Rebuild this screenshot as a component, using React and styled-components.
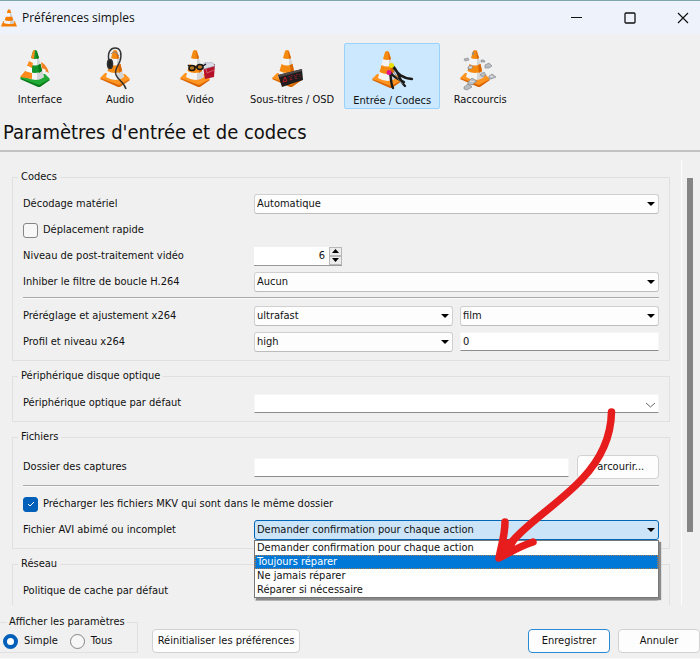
import React from "react";
import styled, { createGlobalStyle } from "styled-components";

const uiFont = '"DejaVu Sans Condensed", "DejaVu Sans", "Noto Sans", sans-serif';

const GlobalStyle = createGlobalStyle`
  *, *::before, *::after { box-sizing: border-box; }
  body {
    margin: 0;
    background: #f0f0f0;
    color: #111;
    font: 11px/16px ${uiFont};
    font-stretch: condensed;
  }
  button, input, select { font: inherit; color: inherit; margin: 0; }
`;

const Window = styled.div`
  position: relative;
  display: flex;
  flex-direction: column;
  height: 100vh;
  overflow: hidden;
  border-top: 1px solid #7ba7ad;
  border-bottom: 1px solid #fafafa;
`;

const TitleBar = styled.header`
  display: flex;
  align-items: center;
  flex: none;
  height: 33px;
  padding-left: 1px;
  background: #eef3fb;
`;

const WindowTitle = styled.h1`
  flex: 1;
  margin: 0 0 0 5px;
  font: 400 12px/18px "Open Sans", "Noto Sans", sans-serif;
  font-stretch: normal;
`;

const CaptionButton = styled.button`
  display: grid;
  place-items: center;
  width: 53px;
  height: 32px;
  padding: 0;
  border: 0;
  background: none;
  &:last-child { margin-right: -9px; }
`;

const Tabs = styled.nav`
  display: flex;
  flex: none;
  padding-top: 9px;
`;

const Tab = styled.button`
  display: flex;
  flex-direction: column;
  align-items: center;
  min-width: 80px;
  height: 66px;
  padding: ${(p) => (p.$active ? "5px 8px 0" : "4px 9px 0")};
  border: 1px solid ${(p) => (p.$active ? "#99d1ff" : "transparent")};
  border-radius: 2px;
  background: ${(p) => (p.$active ? "#cce8ff" : "transparent")};
  white-space: nowrap;
`;

const PageTitle = styled.h2`
  flex: none;
  margin: 0;
  padding: 9px 3px 4px;
  border-bottom: 2px solid #c3c3c3;
  font-size: 20px;
  line-height: 28px;
  font-weight: 400;
`;

const ScrollArea = styled.main`
  display: flex;
  flex: 1;
  min-height: 0;
  overflow: hidden;
`;

const Sections = styled.div`
  display: flex;
  flex: 1;
  flex-direction: column;
  gap: 7px;
  min-width: 0;
  padding: 17px 11px 0 12px;
`;

const Rail = styled.div`
  flex: none;
  width: 19px;
  margin-top: 8px;
  padding: 18px 6px 0 5px;
  border-left: 1px solid #fdfdfd;
`;

const Thumb = styled.div`
  width: 6px;
  height: 83%;
  background: #858585;
`;

const Group = styled.fieldset`
  flex: none;
  min-width: 0;
  margin: 0;
  padding: 9px 10px 8px;
  border: 1px solid #e0e0e0;
`;

const Legend = styled.legend`
  margin-left: -5px;
  padding: 0 3px;
`;

const Rows = styled.div`
  display: flex;
  flex-direction: column;
  gap: 6px;
`;

const Row = styled.div`
  display: grid;
  grid-template-columns: 231px minmax(0, 1fr);
  align-items: center;
  min-height: ${(p) => (p.$tall ? "26px" : "20px")};
`;

const Pair = styled.div`
  display: grid;
  grid-template-columns: 1fr 1fr;
  gap: 7px;
`;

const Browse = styled.div`
  display: flex;
  align-items: center;
  gap: 8px;
`;

const Divider = styled.hr`
  height: 2px;
  margin: 5px 0 7px;
  border: 0;
  border-top: 1px solid #a8a8a8;
  border-bottom: 1px solid #fafafa;
`;

const Field = styled.div`
  position: relative;
  min-width: 0;
`;

const Select = styled.select`
  display: block;
  width: 100%;
  height: 20px;
  padding: 0 20px 0 2px;
  appearance: none;
  border: 1px solid ${(p) => (p.$open ? "#0067b8" : "#d0d0d0")};
  border-bottom-color: ${(p) => (p.$open ? "#0067b8" : "#bcbcbc")};
  border-radius: 3px;
  background: ${(p) => (p.$open ? "#cce4f7" : "#fdfdfd")};
  line-height: 16px;
`;

const TextInput = styled.input`
  display: block;
  flex: 1;
  width: 100%;
  min-width: 0;
  height: 19px;
  padding: 0 2px;
  border: 1px solid #f6f6f6;
  border-bottom: 1px solid #8c8c8c;
  border-radius: 0;
  background: #fff;
`;

const ArrowMark = styled.svg`
  position: absolute;
  top: 8px;
  right: 4px;
  pointer-events: none;
`;

const Spin = styled.div`
  display: flex;
  width: 88px;
  height: 19px;
  border-bottom: 1px solid #999;
  background: #fff;
`;

const SpinInput = styled.input`
  flex: 1;
  min-width: 0;
  padding: 0 4px 0 0;
  border: 0;
  background: none;
  text-align: right;
`;

const SpinButtons = styled.div`
  display: grid;
  grid-template-rows: 1fr 1fr;
  width: 13px;
`;

const SpinButton = styled.button`
  display: grid;
  place-items: center;
  min-height: 0;
  padding: 0;
  border: 1px solid #b8b8b8;
  background: #ececec;
`;

const Check = styled.label`
  display: flex;
  align-items: center;
  gap: 5px;
  min-height: 20px;
`;

const CheckBox = styled.span`
  display: grid;
  flex: none;
  width: 15px;
  height: 15px;
  & > * { grid-area: 1 / 1; place-self: center; pointer-events: none; }
`;

const CheckInput = styled.input`
  && {
    width: 15px;
    height: 15px;
    appearance: none;
    border: 1px solid #858585;
    border-radius: 3px;
    background: #f7f7f7;
    pointer-events: auto;
  }
  &&:checked { border-color: #005fb8; background: #005fb8; }
`;

const Popup = styled.ul`
  position: absolute;
  z-index: 2;
  top: 100%;
  left: 0;
  right: 0;
  margin: 0;
  padding: 0;
  border: 1px solid #777;
  background: #fff;
  box-shadow: 2px 2px 1px #8a8a8a;
  list-style: none;
`;

const Option = styled.li`
  height: 14px;
  padding: 0 2px;
  line-height: 14px;
  background: ${(p) => (p.$current ? "#0078d7" : "transparent")};
  color: ${(p) => (p.$current ? "#fff" : "inherit")};
  outline: ${(p) => (p.$current ? "1px dotted #a97c52" : "none")};
  outline-offset: -1px;
`;

const PushButton = styled.button`
  height: 24px;
  min-width: ${(p) => (p.$wide ? "148px" : "82px")};
  padding: 0 2px;
  border: 1px solid ${(p) => (p.$primary ? "#2b8ad4" : "#d2d2d2")};
  border-radius: 4px;
  background: #fdfdfd;
  white-space: nowrap;
`;

const Footer = styled.footer`
  display: flex;
  flex: none;
  align-items: flex-end;
  gap: 8px;
  padding: 9px 0 5px;
`;

const ModeGroup = styled.fieldset`
  flex: none;
  width: 138px;
  height: 39px;
  margin: 0 6px 0 0;
  padding: 3px 0 0 3px;
  border: 1px solid #e0e0e0;
  border-left: 0;
`;

const ModeLegend = styled.legend`
  margin-left: 4px;
  padding: 0 2px;
  white-space: nowrap;
`;

const Modes = styled.div`
  display: flex;
  gap: 12px;
`;

const ModeLabel = styled.label`
  display: flex;
  align-items: center;
  gap: 6px;
`;

const Radio = styled.input`
  width: 15px;
  height: 15px;
  appearance: none;
  border: 1px solid #858585;
  border-radius: 50%;
  background: #f7f7f7;
  &:checked { border: 4px solid #005fb8; background: #fff; }
`;

const Spacer = styled.div`
  flex: 1;
`;

const Annotation = styled.svg`
  position: absolute;
  z-index: 5;
  top: 403px;
  right: 78px;
  pointer-events: none;
`;

function Cone({ green }) {
  const body = green ? "#12942a" : "#f58a10";
  return (
    <g>
      <path d="M0 31 L5 26 L24 27 L30 32 L20 39 L18 39 Z" fill={green ? "#087a19" : "#d96500"} />
      <path d="M0 30 L5 25 L25 26 L30 31 L19 37 Z" fill={green ? "#20aa35" : "#ff9420"} />
      <path d="M13 3 Q15 1 17 3 L24 29 Q16 35 6 29 Z" fill="#f4f4f4" />
      <path d="M17 3 L24 29 Q21 32 17 32 Z" fill="#c9cbcd" opacity=".75" />
      <path d="M13 3 Q15 1 17 3 L19 10 Q15 12 11 10 Z" fill={body} />
      <path d="M9.500 16 Q15 19 20.500 16 L22 23 Q15 27 7.500 23 Z" fill={body} />
      <path d="M16 2 L19 10 L17 11 Z M18 17 L20.500 16 L22 23 L19 25 Z" fill={green ? "#087a19" : "#d96500"} />
    </g>
  );
}

const extras = {
  interface: (
    <g>
      <path d="M13 3 Q14 2 15 2 L14 11 L11 10 Z M9 13 L13 15 L12 20 L7 18 Z M5 23 L12 25 L12 31 L0 29 Z" fill="#ff8a1c" />
      <path d="M8 18 L12 20 L12 25 L6 23 Z" fill="#fff" />
      <path d="M21 14 Q27 17 29 25 L25 23 L22 21 Z" fill="#f58220" />
      <path d="M22 20 L26 22 L24 24 Z" fill="#fff" />
    </g>
  ),
  audio: (
    <g fill="none" stroke="#333" strokeWidth="1.500">
      <path d="M9 13 C7 4 11 0 15 0 C21 0 22 6 20 13 C18 18 14 22 16 27 C18 32 24 34 26 41" />
      <ellipse cx="10" cy="16" rx="2.500" ry="4.500" fill="#222" />
      <path d="M11 6 Q15 1 19 8" stroke="#888" strokeWidth="1" />
    </g>
  ),
  video: (
    <g>
      <path d="M23 18 L35 16 L34 29 L25 31 Z" fill="#b3122a" />
      <path d="M25 18 L27 25 L34 22" fill="none" stroke="#d65a6c" strokeWidth="1" />
      <path d="M22 17 Q25 13 29 15 Q33 13 35 18 L24 21 Z" fill="#d7dce6" stroke="#8e96a7" strokeWidth=".5" />
      <g fill="#b77725" stroke="#151515" strokeWidth="1.500">
        <ellipse cx="12" cy="20" rx="3" ry="2.500" />
        <ellipse cx="20" cy="19" rx="3" ry="2.500" />
        <path d="M9 18 L8 17 M15 19 L17 19 M23 18 L26 16" />
      </g>
    </g>
  ),
  subtitles: (
    <g>
      <path d="M6 27 L30 21 L31 32 L10 39 Z" fill="#201c1e" />
      <path d="M6 27 L30 21 L30 23 L8 29 Z" fill="#514a4b" />
      <g fill="none" stroke="#b51d2b" strokeWidth="1">
        <path d="M11 34 L13 29 L15 33 Z" />
        <path d="M17 28 L20 32 M20 27 L18 33 M22 27 L25 31 M25 26 L23 31 M27 26 L29 29" strokeDasharray="1 1" />
      </g>
    </g>
  ),
  codecs: (
    <g fill="none" strokeLinecap="round">
      <path d="M17 23 C20 26 18 34 21 39 M20 17 C25 18 27 31 33 37 M21 18 C25 23 28 29 40 30 M19 24 C22 29 26 30 32 33" stroke="#1a1a1a" strokeWidth="2.400" />
      <path d="M22 22 Q25 31 31 35" stroke="#777" strokeWidth=".7" />
      <circle cx="19.500" cy="16.500" r="2.500" fill="#e8df00" />
      <circle cx="17" cy="23.500" r="2.500" fill="#dc148e" />
    </g>
  ),
  shortcuts: (
    <g stroke="#7c8085" strokeWidth=".6" fill="#b9bcc0">
      <path d="M4 11 L8 10 L9 12 L5 13 Z" />
      <path d="M12 5 L14 4 L13 7 Z" />
      <path d="M21 12 L24 12 L25 14 L21 14 Z" />
      <path d="M8 19 L11 17 L13 19 L11 21 L8 21 Z" />
      <path d="M25 17 L29 15 L32 18 L29 20 L25 20 Z" />
      <path d="M20 27 L24 24 L26 27 L23 29 Z" />
      <path d="M29 28 L32 26 L36 29 L31 31 L29 31 Z" />
      <path d="M8 34 L12 30 L17 33 L12 37 L8 37 Z" />
      <path d="M4 39 L8 36 L12 39 L7 42 L4 41 Z" />
      <path d="M10 33 L14 34 M30 28 L33 29 M9 19 L12 20" stroke="#fff" />
    </g>
  ),
};

function TabIcon({ kind }) {
  return (
    <svg width="40" height="44" viewBox="0 0 40 44" overflow="visible" aria-hidden="true">
      <Cone green={kind === "interface"} />
      {extras[kind]}
    </svg>
  );
}

const tabs = [
  ["interface", "Interface"],
  ["audio", "Audio"],
  ["video", "Vidéo"],
  ["subtitles", "Sous-titres / OSD"],
  ["codecs", "Entrée / Codecs"],
  ["shortcuts", "Raccourcis"],
];

function Combo({ id, label, value, open, children }) {
  return (
    <Field>
      <Select id={id} aria-label={label} defaultValue={value} $open={open}>
        <option>{value}</option>
      </Select>
      <ArrowMark width="8" height="4" viewBox="0 0 8 4" aria-hidden="true">
        <path d="M0 0 H8 L4 4 Z" fill="#000" />
      </ArrowMark>
      {children}
    </Field>
  );
}

function Tick({ checked, children }) {
  return (
    <Check>
      <CheckBox>
        <CheckInput type="checkbox" defaultChecked={checked} />
        {checked && (
          <svg width="10" height="10" viewBox="0 0 10 10" aria-hidden="true">
            <path d="M2 5 L4 7 L8 3" fill="none" stroke="#fff" strokeWidth="1" />
          </svg>
        )}
      </CheckBox>
      {children}
    </Check>
  );
}

const repairChoices = [
  "Demander confirmation pour chaque action",
  "Toujours réparer",
  "Ne jamais réparer",
  "Réparer si nécessaire",
];

export default function App() {
  return (
    <>
      <GlobalStyle />
      <Window>
        <TitleBar>
          <svg width="16" height="18" viewBox="0 0 30 40" preserveAspectRatio="none" aria-hidden="true">
            <path d="M4 27 H26 L30 39 H0 Z" fill="#f57c00" />
            <path d="M13 1 H17 L25 31 Q15 36 5 31 Z" fill="#f4f4f4" />
            <path d="M17 1 L25 31 Q21 34 17 34 Z" fill="#cfcfcf" />
            <path d="M13 1 H17 L19 9 H11 Z M9 17 H21 L23 25 Q15 28 7 25 Z" fill="#f57c00" />
          </svg>
          <WindowTitle>Préférences simples</WindowTitle>
          <CaptionButton aria-label="Réduire">
            <svg width="12" height="12" viewBox="0 0 12 12"><path d="M0 5.500 H11" stroke="#111" /></svg>
          </CaptionButton>
          <CaptionButton aria-label="Agrandir">
            <svg width="12" height="12" viewBox="0 0 12 12"><rect x="1" y="1" width="10" height="10" rx="1" fill="none" stroke="#111" strokeWidth="1.300" /></svg>
          </CaptionButton>
          <CaptionButton aria-label="Fermer">
            <svg width="12" height="12" viewBox="0 0 12 12"><path d="M1 1 L11 11 M11 1 L1 11" stroke="#111" strokeWidth="1.200" /></svg>
          </CaptionButton>
        </TitleBar>

        <Tabs>
          {tabs.map(([kind, label]) => (
            <Tab key={kind} $active={kind === "codecs"} aria-pressed={kind === "codecs"}>
              <TabIcon kind={kind} />
              {label}
            </Tab>
          ))}
        </Tabs>
        <PageTitle>Paramètres d'entrée et de codecs</PageTitle>

        <ScrollArea>
          <Sections>
            <Group>
              <Legend>Codecs</Legend>
              <Rows>
                <Row>
                  <label htmlFor="hardware">Décodage matériel</label>
                  <Combo id="hardware" value="Automatique" />
                </Row>
                <Tick>Déplacement rapide</Tick>
                <Row>
                  <label htmlFor="quality">Niveau de post-traitement vidéo</label>
                  <Spin>
                    <SpinInput id="quality" defaultValue="6" />
                    <SpinButtons>
                      <SpinButton aria-label="Augmenter">
                        <svg width="7" height="4" viewBox="0 0 7 4"><path d="M0 4 H7 L3.500 0 Z" /></svg>
                      </SpinButton>
                      <SpinButton aria-label="Diminuer">
                        <svg width="7" height="4" viewBox="0 0 7 4"><path d="M0 0 H7 L3.500 4 Z" /></svg>
                      </SpinButton>
                    </SpinButtons>
                  </Spin>
                </Row>
                <Row>
                  <label htmlFor="loop">Inhiber le filtre de boucle H.264</label>
                  <Combo id="loop" value="Aucun" />
                </Row>
              </Rows>
              <Divider />
              <Rows>
                <Row>
                  <label htmlFor="preset">Préréglage et ajustement x264</label>
                  <Pair>
                    <Combo id="preset" value="ultrafast" />
                    <Combo label="Ajustement x264" value="film" />
                  </Pair>
                </Row>
                <Row>
                  <label htmlFor="profile">Profil et niveau x264</label>
                  <Pair>
                    <Combo id="profile" value="high" />
                    <TextInput aria-label="Niveau x264" defaultValue="0" />
                  </Pair>
                </Row>
              </Rows>
            </Group>

            <Group>
              <Legend>Périphérique disque optique</Legend>
              <Row>
                <label htmlFor="disc">Périphérique optique par défaut</label>
                <Field>
                  <TextInput id="disc" role="combobox" aria-expanded="false" />
                  <ArrowMark width="9" height="6" viewBox="0 0 9 6" aria-hidden="true">
                    <path d="M0 1 L4.500 5 L9 1" fill="none" stroke="#666" />
                  </ArrowMark>
                </Field>
              </Row>
            </Group>

            <Group>
              <Legend>Fichiers</Legend>
              <Row $tall>
                <label htmlFor="captures">Dossier des captures</label>
                <Browse>
                  <TextInput id="captures" />
                  <PushButton>Parcourir...</PushButton>
                </Browse>
              </Row>
              <Divider />
              <Rows>
                <Tick checked>Précharger les fichiers MKV qui sont dans le même dossier</Tick>
                <Row>
                  <label htmlFor="avi">Fichier AVI abimé ou incomplet</label>
                  <Combo id="avi" value={repairChoices[0]} open>
                    <Popup role="listbox" aria-label="Fichier AVI abimé ou incomplet">
                      {repairChoices.map((choice, i) => (
                        <Option key={choice} role="option" aria-selected={i === 1} $current={i === 1}>
                          {choice}
                        </Option>
                      ))}
                    </Popup>
                  </Combo>
                </Row>
              </Rows>
            </Group>

            <Group>
              <Legend>Réseau</Legend>
              <Rows>
                <Row>
                  <label htmlFor="cache">Politique de cache par défaut</label>
                  <Combo id="cache" value="Normale" />
                </Row>
              </Rows>
            </Group>
          </Sections>
          <Rail>
            <Thumb />
          </Rail>
        </ScrollArea>

        <Footer>
          <ModeGroup>
            <ModeLegend>Afficher les paramètres</ModeLegend>
            <Modes>
              <ModeLabel><Radio type="radio" name="mode" defaultChecked />Simple</ModeLabel>
              <ModeLabel><Radio type="radio" name="mode" />Tous</ModeLabel>
            </Modes>
          </ModeGroup>
          <PushButton $wide>Réinitialiser les préférences</PushButton>
          <Spacer />
          <PushButton $primary>Enregistrer</PushButton>
          <PushButton>Annuler</PushButton>
        </Footer>

        <Annotation width="132" height="164" viewBox="490 404 132 164" aria-hidden="true">
          <path
            d="M611.500 412 C611 438 601 459 582 479 C556 507 520 526 500 557 M505 522 C505 535 501 547 499 558 C509 553 520 546 533 542"
            fill="none"
            stroke="#e71d1d"
            strokeWidth="7.500"
            strokeLinecap="round"
            strokeLinejoin="round"
          />
          <path d="M499 558 L505 540 L519 537 L512 551 Z" fill="#e71d1d" />
        </Annotation>
      </Window>
    </>
  );
}
